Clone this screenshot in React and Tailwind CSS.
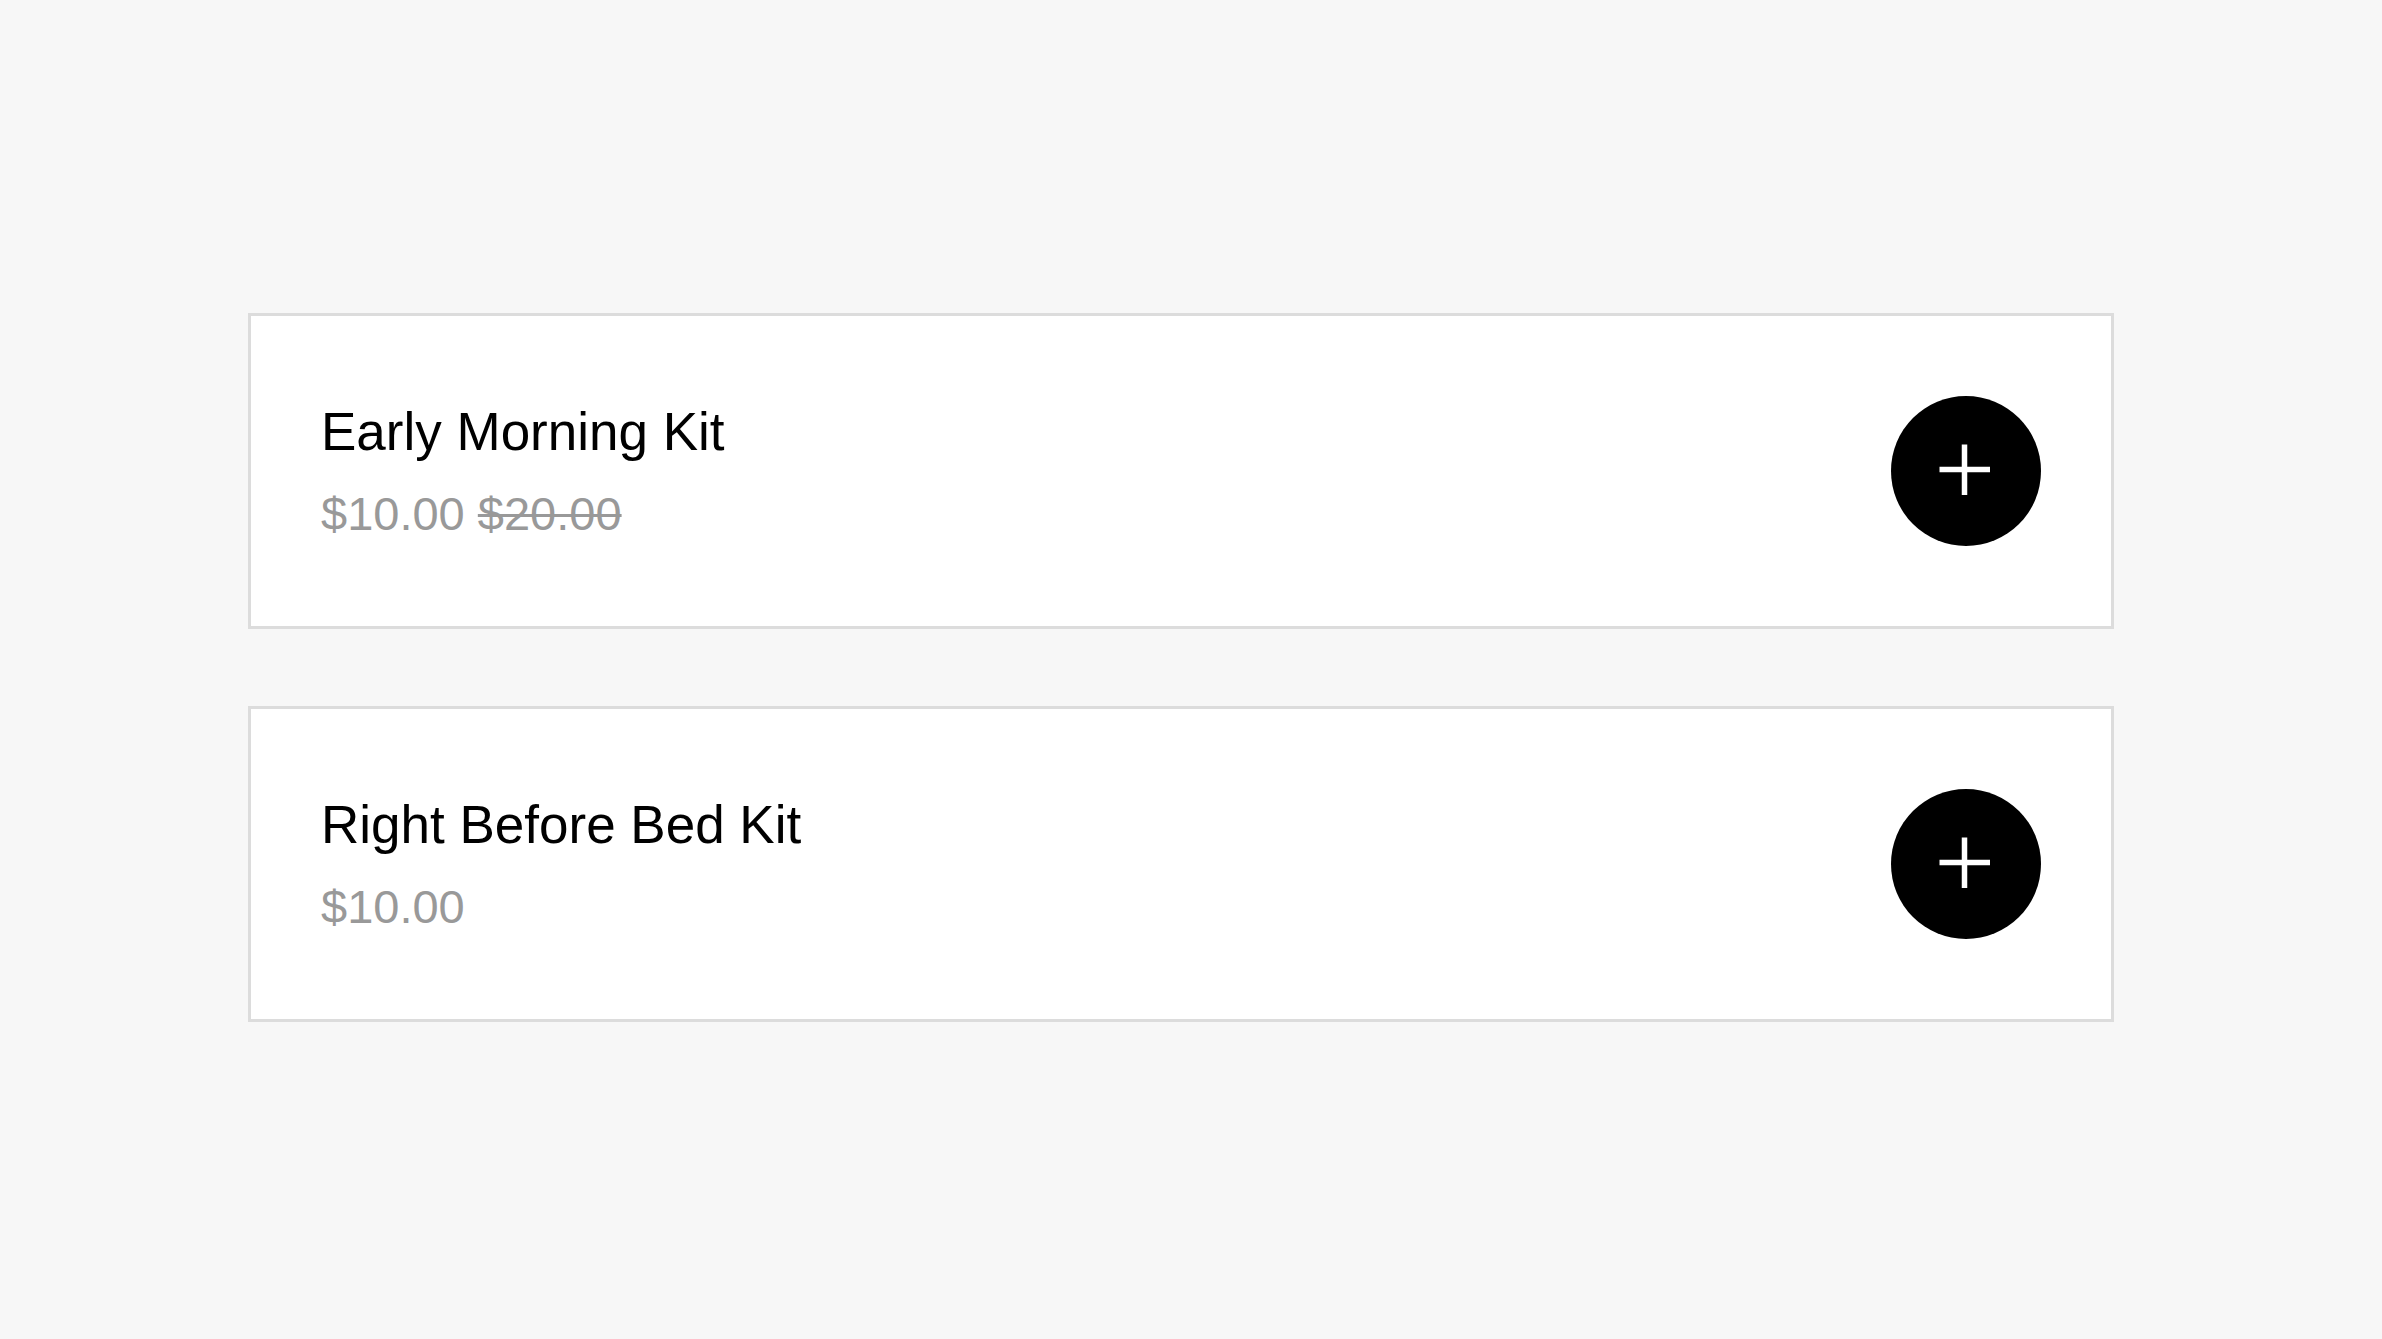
const KITS = [
  { id: "early-morning", name: "Early Morning Kit", price: "$10.00", oldPrice: "$20.00" },
  { id: "right-before-bed", name: "Right Before Bed Kit", price: "$10.00" },
];

function PlusIcon() {
  return (
    <svg viewBox="0 0 54 54" fill="none" className="w-[54px] h-[54px]" aria-hidden="true">
      <path d="M25.5 0.5 V51 M0.5 25.5 H51" stroke="currentColor" strokeWidth="5.5" />
    </svg>
  );
}

function KitCard({ kit }) {
  return (
    <li className="flex items-center justify-between border-3 border-[#dcdcdc] bg-white px-[70px] py-20">
      <div>
        <h2 className="text-[53px] leading-[72px] text-black">{kit.name}</h2>
        <p className="mt-3.5 text-[47px] leading-[64px] text-[#999]">
          {kit.price} {kit.oldPrice && <s className="decoration-3">{kit.oldPrice}</s>}
        </p>
      </div>
      <button
        type="button"
        aria-label={`Add ${kit.name}`}
        className="flex size-[150px] shrink-0 items-center justify-center rounded-full bg-black text-white"
      >
        <PlusIcon />
      </button>
    </li>
  );
}

export default function App() {
  return (
    <main className="flex min-h-screen flex-col bg-[#f7f7f7] pt-[313px] pr-[268px] pb-20 pl-[248px] font-['Liberation_Sans',Arial,sans-serif]">
      <ul className="flex flex-col gap-[77px]">
        {KITS.map((kit) => (
          <KitCard key={kit.id} kit={kit} />
        ))}
      </ul>
    </main>
  );
}
